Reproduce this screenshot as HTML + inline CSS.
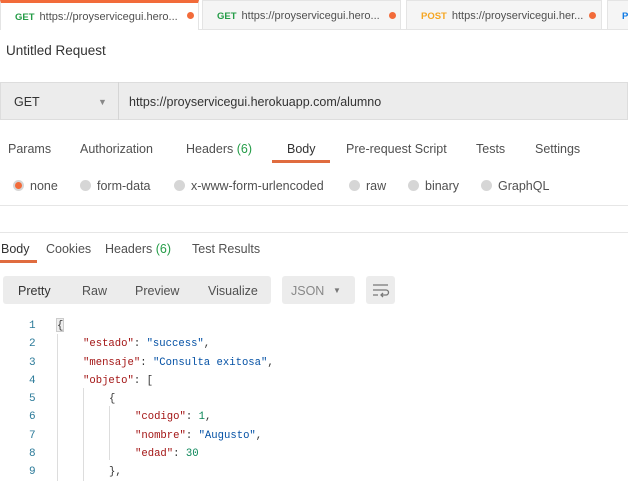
<!DOCTYPE html><html><head><style>
body{margin:0;width:628px;height:481px;overflow:hidden;background:#fff;font-family:"Liberation Sans",sans-serif;color:#505050;position:relative}
.a{position:absolute;white-space:nowrap}
.tab{position:absolute;top:0;height:30px;background:#f5f5f5;border:1px solid #e4e4e4;box-sizing:border-box;font-size:11px;line-height:30px;padding-left:14px;color:#505050;overflow:hidden}
.tab b{font-size:9.5px;margin-right:5px}
.dot{position:absolute;top:12px;width:7px;height:7px;border-radius:50%;background:#f26b3a}
.t{font-size:12.5px;color:#505050}
.r{display:inline-block;width:11px;height:11px;border-radius:50%;background:#d6d6d6;vertical-align:-1px;margin-right:6px;box-sizing:border-box}
.code{font-family:"Liberation Mono",monospace;font-size:10.6px;color:#a31515}
.n{color:#2b7a99;font-family:"Liberation Mono",monospace;font-size:11px}
.s{color:#0451a5}.g{color:#098658}.k{color:#333}
</style></head><body>
<div class="a" style="left:0;top:29px;width:628px;height:1px;background:#e4e4e4"></div>
<div class="tab" style="left:0;width:199px;background:#fff;border-top:3px solid #f26b3a;border-bottom:none;line-height:28px"><b style="color:#249c47">GET</b>https://proyservicegui.hero...</div>
<div class="tab" style="left:202px;width:199px"><b style="color:#249c47">GET</b>https://proyservicegui.hero...</div>
<div class="tab" style="left:406px;width:196px"><b style="color:#f5a623">POST</b>https://proyservicegui.her...</div>
<div class="tab" style="left:607px;width:30px"><b style="color:#0f7ae5">PU</b></div>
<div class="a dot" style="left:187px"></div>
<div class="a dot" style="left:389px"></div>
<div class="a dot" style="left:589px"></div>
<div class="a t" style="left:6px;top:43px;font-size:13.5px;color:#333">Untitled Request</div>
<div class="a" style="left:0;top:82px;width:628px;height:38px;background:#ececec;border:1px solid #ddd;box-sizing:border-box"></div>
<div class="a" style="left:118px;top:82px;width:1px;height:38px;background:#d5d5d5"></div>
<div class="a t" style="left:14px;top:95px;color:#333">GET</div>
<div class="a" style="left:98px;top:97px;font-size:9px;color:#888">▼</div>
<div class="a t" style="left:129px;top:95px;color:#333">https://proyservicegui.herokuapp.com/alumno</div>
<div class="a t" style="left:8px;top:142px">Params</div>
<div class="a t" style="left:80px;top:142px">Authorization</div>
<div class="a t" style="left:186px;top:142px">Headers <span style="color:#249c47">(6)</span></div>
<div class="a t" style="left:287px;top:142px;color:#333">Body</div>
<div class="a" style="left:272px;top:160px;width:58px;height:3px;background:#e06c3f"></div>
<div class="a t" style="left:346px;top:142px">Pre-request Script</div>
<div class="a t" style="left:476px;top:142px">Tests</div>
<div class="a t" style="left:535px;top:142px">Settings</div>
<div class="a t" style="left:13px;top:179px"><span class="r" style="background:#f26b3a;border:2.5px solid #d6d6d6"></span>none</div>
<div class="a t" style="left:80px;top:179px"><span class="r"></span>form-data</div>
<div class="a t" style="left:174px;top:179px"><span class="r"></span>x-www-form-urlencoded</div>
<div class="a t" style="left:349px;top:179px"><span class="r"></span>raw</div>
<div class="a t" style="left:408px;top:179px"><span class="r"></span>binary</div>
<div class="a t" style="left:481px;top:179px"><span class="r"></span>GraphQL</div>
<div class="a" style="left:0;top:205px;width:628px;height:1px;background:#e6e6e6"></div>
<div class="a" style="left:0;top:232px;width:628px;height:1px;background:#e6e6e6"></div>
<div class="a t" style="left:1px;top:242px;color:#333">Body</div>
<div class="a" style="left:0;top:260px;width:37px;height:3px;background:#e06c3f"></div>
<div class="a t" style="left:46px;top:242px">Cookies</div>
<div class="a t" style="left:105px;top:242px">Headers <span style="color:#249c47">(6)</span></div>
<div class="a t" style="left:192px;top:242px">Test Results</div>
<div class="a" style="left:3px;top:276px;width:268px;height:28px;background:#ececec;border-radius:3px"></div>
<div class="a t" style="left:18px;top:284px;color:#333">Pretty</div>
<div class="a t" style="left:82px;top:284px">Raw</div>
<div class="a t" style="left:135px;top:284px">Preview</div>
<div class="a t" style="left:208px;top:284px">Visualize</div>
<div class="a" style="left:282px;top:276px;width:73px;height:28px;background:#ececec;border-radius:3px"></div>
<div class="a t" style="left:291px;top:284px;color:#888">JSON</div>
<div class="a" style="left:333px;top:286px;font-size:8px;color:#777">▼</div>
<div class="a" style="left:366px;top:276px;width:29px;height:28px;background:#ececec;border-radius:3px"></div>
<svg class="a" style="left:372px;top:283px" width="18" height="15"><path d="M1 2H16M1 7H14a2.5 2.5 0 0 1 0 5H9M11 10l-2 2 2 2M1 12H6" stroke="#777" stroke-width="1.3" fill="none"/></svg>
<div class="a" style="left:56px;top:318px;width:8px;height:14px;background:#eee;border:1px solid #ccc;box-sizing:border-box"></div>
<div class="a" style="left:57px;top:334px;width:1px;height:147px;background:#ddd"></div>
<div class="a" style="left:83px;top:388px;width:1px;height:93px;background:#ddd"></div>
<div class="a" style="left:109px;top:406px;width:1px;height:54px;background:#ddd"></div>
<div class="a n" style="left:29px;top:317px;line-height:18.25px">1<br>2<br>3<br>4<br>5<br>6<br>7<br>8<br>9</div>
<div class="a code" style="left:57px;top:317px;line-height:18.25px"><span class="k">{</span><br>
<span style="padding-left:26px">"estado"<span class="k">: </span><span class="s">"success"</span><span class="k">,</span></span><br>
<span style="padding-left:26px">"mensaje"<span class="k">: </span><span class="s">"Consulta exitosa"</span><span class="k">,</span></span><br>
<span style="padding-left:26px">"objeto"<span class="k">: [</span></span><br>
<span class="k" style="padding-left:52px">{</span><br>
<span style="padding-left:78px">"codigo"<span class="k">: </span><span class="g">1</span><span class="k">,</span></span><br>
<span style="padding-left:78px">"nombre"<span class="k">: </span><span class="s">"Augusto"</span><span class="k">,</span></span><br>
<span style="padding-left:78px">"edad"<span class="k">: </span><span class="g">30</span></span><br>
<span class="k" style="padding-left:52px">},</span></div>
</body></html>
